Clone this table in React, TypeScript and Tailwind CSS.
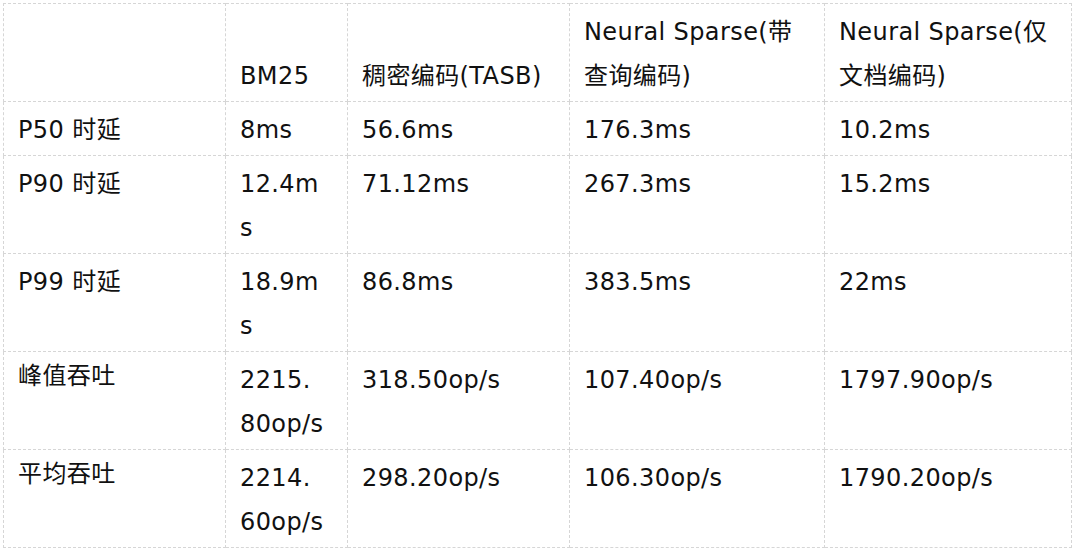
import React from "react";

const font = {
  fontFamily: '"DejaVu Sans", "Noto Sans CJK SC", sans-serif',
};

type Row = { label: string; cjk?: boolean; cells: React.ReactNode[] };

const rows: Row[] = [
  { label: "P50 时延", cells: ["8ms", "56.6ms", "176.3ms", "10.2ms"] },
  {
    label: "P90 时延",
    cells: [<>12.4m<br />s</>, "71.12ms", "267.3ms", "15.2ms"],
  },
  {
    label: "P99 时延",
    cells: [<>18.9m<br />s</>, "86.8ms", "383.5ms", "22ms"],
  },
  {
    label: "峰值吞吐",
    cjk: true,
    cells: [<>2215.<br />80op/s</>, "318.50op/s", "107.40op/s", "1797.90op/s"],
  },
  {
    label: "平均吞吐",
    cjk: true,
    cells: [<>2214.<br />60op/s</>, "298.20op/s", "106.30op/s", "1790.20op/s"],
  },
];

const cellCls =
  "border border-dashed border-[#d6d6d6] align-top pl-[14px] pr-1 pt-[6px] pb-[3px] leading-[44px] whitespace-nowrap";
const cjkCellCls =
  "border border-dashed border-[#d6d6d6] align-top pl-[14px] pr-1 pt-[2px] pb-[7px] leading-[44px] whitespace-nowrap";
const headCls =
  "border border-dashed border-[#d6d6d6] align-bottom pl-[14px] pr-1 pt-[1px] pb-[8px] leading-[44px] font-normal text-left whitespace-nowrap";
const headLatinCls =
  "border border-dashed border-[#d6d6d6] align-bottom pl-[14px] pr-1 pt-[6px] pb-[3px] leading-[44px] font-normal text-left whitespace-nowrap";

export default function App() {
  return (
    <div
      className="w-[1080px] h-[556px] bg-white pt-[3px] pl-[3px] text-[#111] text-[24px] tracking-[0.4px]"
      style={font}
    >
      <table className="border-collapse table-fixed w-[1068px]">
        <colgroup>
          <col className="w-[222px]" />
          <col className="w-[122px]" />
          <col className="w-[222px]" />
          <col className="w-[255px]" />
          <col className="w-[247px]" />
        </colgroup>
        <thead>
          <tr>
            <th className={headLatinCls}>
              <br />
              &nbsp;
            </th>
            <th className={headLatinCls}>BM25</th>
            <th className={headLatinCls}>稠密编码(TASB)</th>
            <th className={headLatinCls}>
              Neural Sparse(带<br />查询编码)
            </th>
            <th className={headLatinCls}>
              Neural Sparse(仅<br />文档编码)
            </th>
          </tr>
        </thead>
        <tbody>
          {rows.map((r) => (
            <tr key={r.label}>
              <td className={r.cjk ? cjkCellCls : cellCls}>{r.label}</td>
              {r.cells.map((c, i) => (
                <td key={i} className={cellCls}>
                  {c}
                </td>
              ))}
            </tr>
          ))}
        </tbody>
      </table>
    </div>
  );
}
